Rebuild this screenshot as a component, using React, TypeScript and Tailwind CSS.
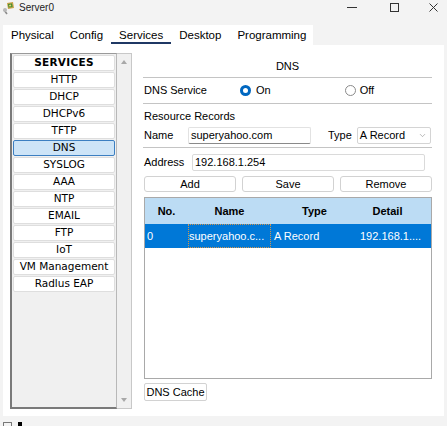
import { ChevronDown } from "lucide-react"

const services = [
  "HTTP",
  "DHCP",
  "DHCPv6",
  "TFTP",
  "DNS",
  "SYSLOG",
  "AAA",
  "NTP",
  "EMAIL",
  "FTP",
  "IoT",
  "VM Management",
  "Radlus EAP",
]

const tabs = ["Physical", "Config", "Services", "Desktop", "Programming"]

function ServerIcon() {
  return (
    <svg width="14" height="14" viewBox="0 0 14 14">
      <path d="M2 9 L5 13" stroke="#8a8a8a" strokeWidth="1.5" />
      <circle cx="3" cy="9" r="2" fill="#b8b8b8" />
      <path d="M5 2 L11 1 L12 7 L6 8 Z" fill="#c9a24a" />
      <path d="M6 3 L10 2.4 L10.6 6 L6.6 6.6 Z" fill="#3f8f2f" />
      <path d="M7 4 L9 3.6 L9.3 5.2 L7.3 5.6 Z" fill="#e8d070" />
    </svg>
  )
}

function Radio({ checked }: { checked: boolean }) {
  return checked ? (
    <span className="shrink-0 w-[11px] h-[11px] rounded-full bg-[#0067c0] flex items-center justify-center">
      <span className="w-[5px] h-[5px] rounded-full bg-white" />
    </span>
  ) : (
    <span className="shrink-0 block w-[11px] h-[11px] rounded-full border border-[#8a8a8a] bg-white" />
  )
}

export default function App() {
  return (
    <div className="w-[447px] h-[426px] overflow-hidden bg-[#f3f3f3] flex flex-col text-[11px] text-black font-['Liberation_Sans',Arial,sans-serif]">
      {/* title bar */}
      <div className="h-[15px] flex items-center pl-[2px] shrink-0">
        <ServerIcon />
        <span className="ml-[3px] text-[10px] text-[#222] leading-[12px]">Server0</span>
        <div className="ml-auto flex items-center">
          <span className="w-[10px] h-px bg-[#333] mr-[33px]" />
          <span className="w-[9px] h-[9px] border border-[#333] mr-[30px]" />
          <svg width="9" height="9" viewBox="0 0 9 9" className="mr-[9px]">
            <path d="M0.5 0.5 L8.5 8.5 M8.5 0.5 L0.5 8.5" stroke="#333" strokeWidth="1" />
          </svg>
        </div>
      </div>

      {/* tabs */}
      <div className="h-[10px] shrink-0" />
      <div className="h-[20px] shrink-0 flex">
        <div className="ml-[3px] w-[310px] bg-white flex items-stretch">
          {tabs.map((t) => (
            <div
              key={t}
              className="px-[8px] pt-[1px] flex items-center text-[11.5px] relative text-black"
            >
              {t}
              {t === "Services" && (
                <span className="absolute left-0 right-0 bottom-[1px] h-[2px] bg-[#1f3864]" />
              )}
            </div>
          ))}
        </div>
      </div>

      {/* main */}
      <div className="mx-[3px] h-[371px] bg-white flex shrink-0">
        {/* services list */}
        <div className="ml-[7px] mt-[8px] h-[356px] flex">
          <div className="w-[107px] h-full bg-[#f0f0f0] border-t border-r border-t-[#9a9a9a] border-r-[#b8b8b8] border-l-2 border-b-2 border-l-[#7a7a7a] border-b-[#7a7a7a] pl-[1px] pr-[1px] pt-[1px] flex flex-col gap-px font-['DejaVu_Sans',Verdana,sans-serif] text-[10.5px]">
            <div className="h-[16px] bg-white border border-[#dedede] rounded-[2px] flex items-center justify-center font-bold tracking-[0.3px]">
              SERVICES
            </div>
            {services.map((s) => (
              <div
                key={s}
                className={`h-[16px] border rounded-[2px] flex items-center justify-center ${
                  s === "DNS"
                    ? "bg-[#cde4f7] border-[#3c7fc1]"
                    : "bg-white border-[#dedede]"
                }`}
              >
                {s}
              </div>
            ))}
          </div>
          <div className="w-[15px] h-full bg-[#f0f0f0] border border-l-0 border-[#c8c8c8] flex flex-col items-center justify-between py-[6px]">
            <span className="w-0 h-0 border-l-[3px] border-r-[3px] border-b-[4px] border-l-transparent border-r-transparent border-b-[#a8a8a8]" />
            <span className="w-0 h-0 border-l-[3px] border-r-[3px] border-t-[4px] border-l-transparent border-r-transparent border-t-[#a8a8a8]" />
          </div>
        </div>

        {/* DNS panel */}
        <div className="ml-[11px] w-[289px] flex flex-col">
          <div className="h-[33px] flex items-end justify-center pb-[4px] border-b border-[#c4c4c4]">
            <span className="leading-[14px]">DNS</span>
          </div>
          <div className="h-[26px] flex items-center border-b border-[#c4c4c4] pl-[1px]">
            <span className="w-[96px]">DNS Service</span>
            <Radio checked />
            <span className="ml-[5px]">On</span>
            <span className="ml-[74px] flex items-center">
              <Radio checked={false} />
            </span>
            <span className="ml-[4px]">Off</span>
          </div>
          <div className="h-[20px] flex items-end pl-[1px]">
            <span className="leading-[14px] pb-[1px]">Resource Records</span>
          </div>
          <div className="h-[24px] flex items-center border-b border-[#c4c4c4] pl-[1px]">
            <span className="w-[44px]">Name</span>
            <div className="w-[123px] h-[17px] border border-[#e2e2e2] border-b-[#8a8a8a] rounded-[2px] flex items-center pl-[2px]">
              superyahoo.com
            </div>
            <span className="ml-[17px]">Type</span>
            <div className="ml-[5px] w-[74px] h-[17px] border border-[#d4d4d4] rounded-[2px] flex items-center pl-[2px]">
              A Record
              <ChevronDown size={9} className="ml-auto mr-[3px] text-[#888]" strokeWidth={1.5} />
            </div>
          </div>
          <div className="mt-[6px] h-[17px] flex items-center pl-[1px]">
            <span className="w-[48px]">Address</span>
            <div className="w-[233px] h-[17px] border border-[#dadada] rounded-[2px] flex items-center pl-[2px]">
              192.168.1.254
            </div>
          </div>
          <div className="mt-[5px] h-[16px] flex gap-[6px] pl-[1px]">
            {["Add", "Save", "Remove"].map((b) => (
              <div
                key={b}
                className="flex-1 bg-white border border-[#d2d2d2] rounded-[3px] flex items-center justify-center"
              >
                {b}
              </div>
            ))}
          </div>
          <div className="mt-[5px] ml-[1px] h-[182px] border border-[#a9a9a9] flex flex-col">
            <div className="h-[26px] bg-[#bcdcf4] flex items-center font-bold">
              <span className="w-[43px] text-center">No.</span>
              <span className="w-[83px] text-center">Name</span>
              <span className="w-[87px] text-center">Type</span>
              <span className="flex-1 text-center pr-[14px]">Detail</span>
            </div>
            <div className="h-[24px] bg-[#0078d7] flex items-stretch text-white">
              <span className="w-[43px] flex items-center pl-[2px]">0</span>
              <span className="w-[83px] flex items-center border border-dotted border-[#d09550]">
                superyahoo.c...
              </span>
              <span className="w-[87px] flex items-center pl-[3px]">A Record</span>
              <span className="flex-1 flex items-center pl-[2px]">192.168.1....</span>
            </div>
          </div>
          <div className="mt-[4px] ml-[1px] w-[63px] h-[18px] bg-white border border-[#d2d2d2] rounded-[2px] flex items-center justify-center">
            DNS Cache
          </div>
        </div>
      </div>

      {/* bottom bar */}
      <div className="flex-1 flex items-end pl-[3px] gap-[6px]">
        <span className="w-[9px] h-[4px] border border-b-0 border-[#777] rounded-t-[1px]" />
        <span className="w-[4px] h-[4px] bg-black" />
      </div>
    </div>
  )
}
